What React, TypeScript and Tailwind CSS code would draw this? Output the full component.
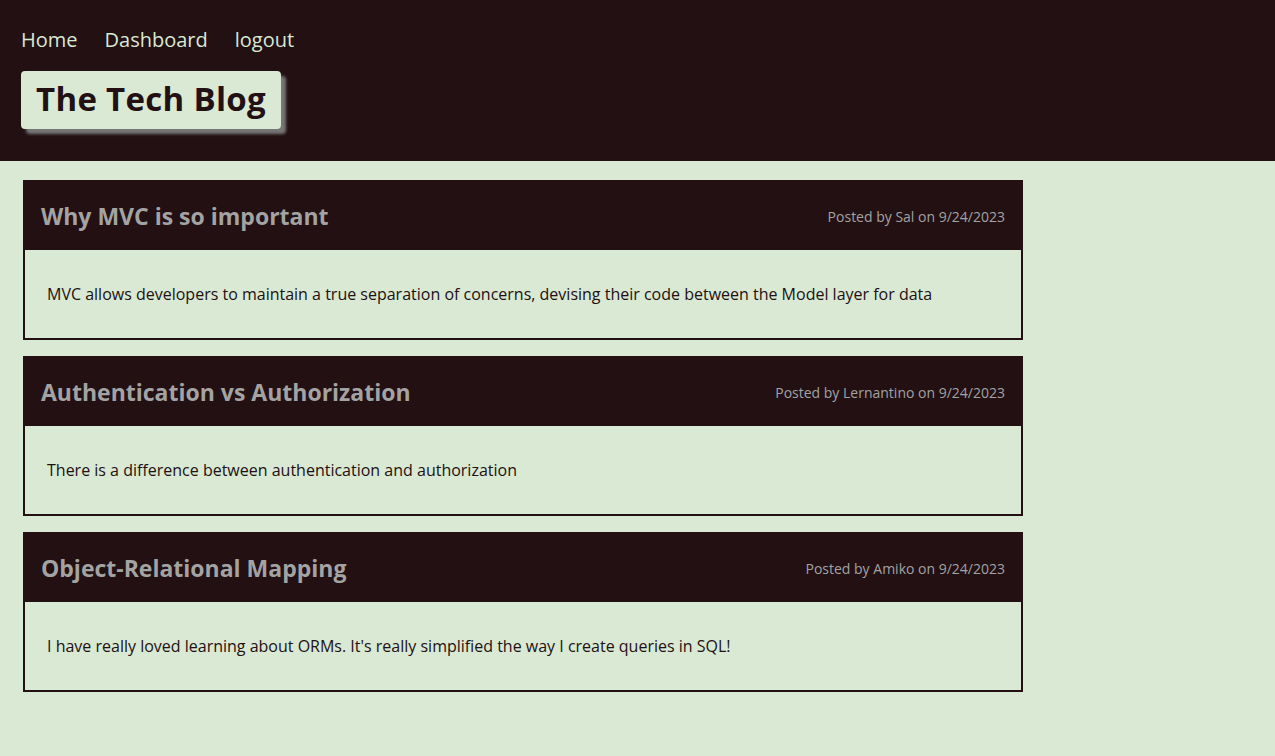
import React from "react";

const posts = [
	{
		title: "Why MVC is so important",
		author: "Sal",
		date: "9/24/2023",
		body: "MVC allows developers to maintain a true separation of concerns, devising their code between the Model layer for data",
	},
	{
		title: "Authentication vs Authorization",
		author: "Lernantino",
		date: "9/24/2023",
		body: "There is a difference between authentication and authorization",
	},
	{
		title: "Object-Relational Mapping",
		author: "Amiko",
		date: "9/24/2023",
		body: "I have really loved learning about ORMs. It's really simplified the way I create queries in SQL!",
	},
];

export default function App() {
	return (
		<div className="min-h-screen bg-[#d9e9d3] font-['Open_Sans',sans-serif]">
			<header className="bg-[#221012] h-[161px] px-[21px] pt-[28px]">
				<nav className="flex gap-[27px] text-[20px] text-[#d9e9d3] leading-6">
					<a href="#">Home</a>
					<a href="#">Dashboard</a>
					<a href="#">logout</a>
				</nav>
				<div className="mt-[19px] inline-block bg-[#d9e9d3] rounded-[4px] px-[15px] h-[58px] leading-[56px] shadow-[5px_5px_3px_#767676]">
					<h1 className="text-[33px] font-bold tracking-[0.3px] text-[#221012]">The Tech Blog</h1>
				</div>
			</header>
			<main className="px-[23px] pt-[19px] flex flex-col gap-[16px]">
				{posts.map((post) => (
					<article key={post.title} className="w-[1000px] border-2 border-[#221012]">
						<div className="bg-[#221012] h-[68px] flex items-center justify-between px-[16px]">
							<h2 className="text-[23px] font-bold text-[#a3a3a3]">{post.title}</h2>
							<span className="text-[14px] text-[#a3a3a3]">
								Posted by {post.author} on {post.date}
							</span>
						</div>
						<div className="h-[88px] flex items-center px-[22px] text-[16px] text-[#221012]">
							<p>{post.body}</p>
						</div>
					</article>
				))}
			</main>
		</div>
	);
}
